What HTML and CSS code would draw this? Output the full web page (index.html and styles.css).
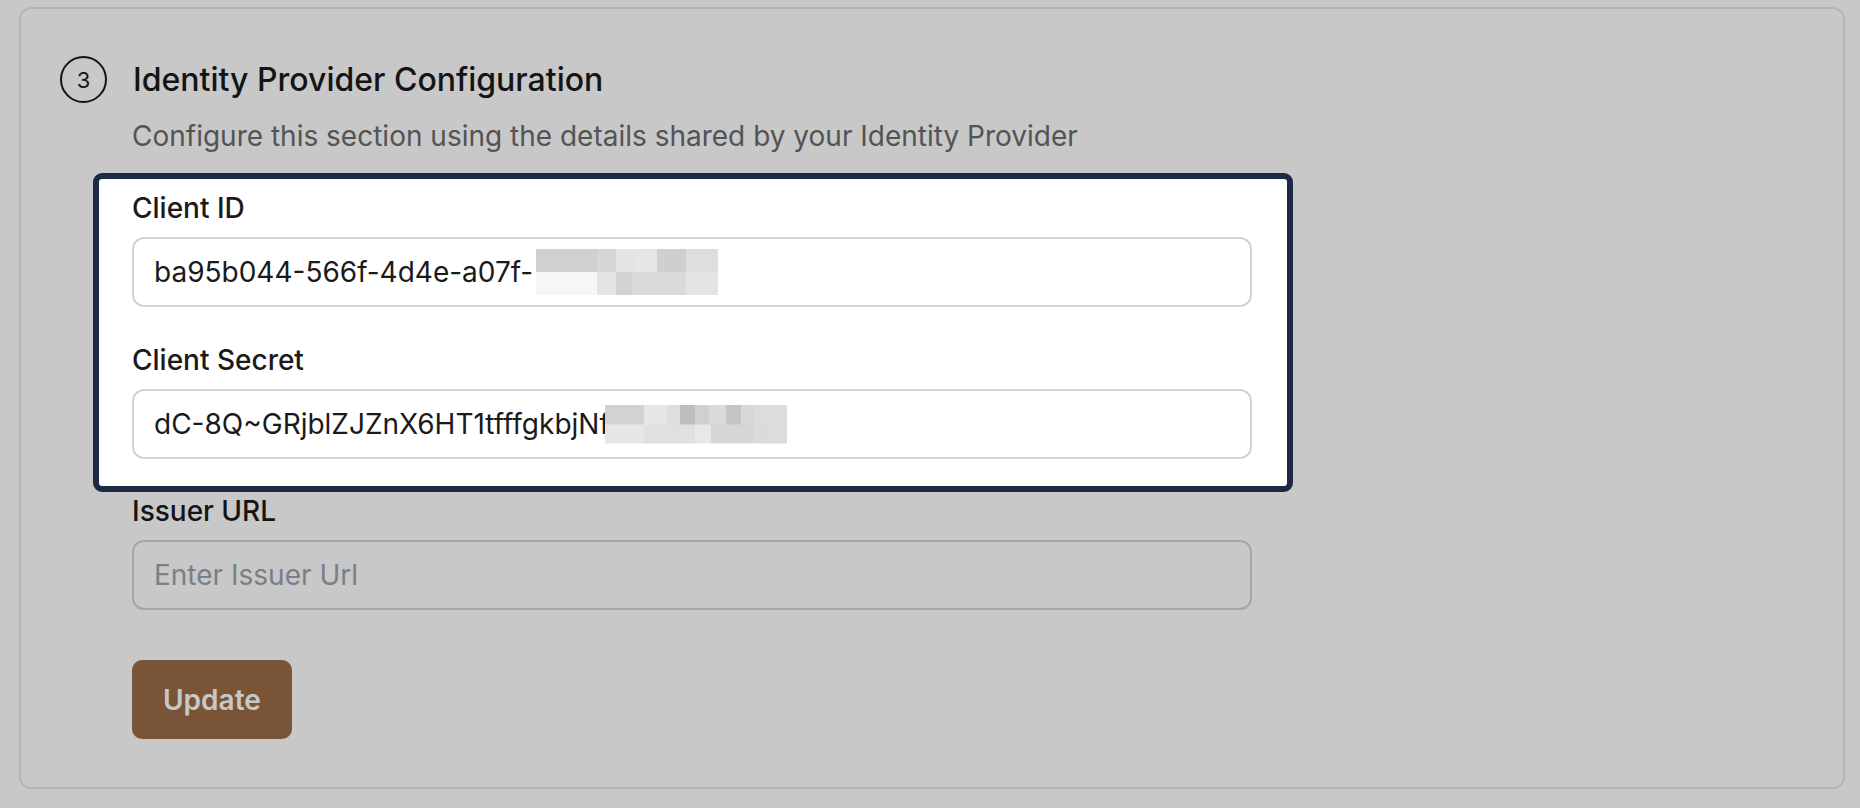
FILE: index.html
```html
<!DOCTYPE html>
<html lang="en">
<head>
<meta charset="utf-8">
<title>Identity Provider Configuration</title>
<link rel="stylesheet" href="styles.css">
</head>
<body>
<div class="page">
  <section class="card">
    <div class="step-head">
      <span class="step-num">3</span>
      <h2 class="step-title">Identity Provider Configuration</h2>
    </div>
    <div class="step-body">
      <p class="step-desc">Configure this section using the details shared by your Identity Provider</p>

      <div class="spotlight">
        <div class="field">
          <label class="field-label">Client ID</label>
          <div class="field-input"><span class="value">ba95b044-566f-4d4e-a07f-</span><span class="mosaic mosaic-id"></span></div>
        </div>
        <div class="field field-next">
          <label class="field-label">Client Secret</label>
          <div class="field-input"><span class="value">dC-8Q~GRjblZJZnX6HT1tfffgkbjNf</span><span class="mosaic mosaic-secret"></span></div>
        </div>
      </div>

      <div class="field field-issuer">
        <label class="field-label">Issuer URL</label>
        <div class="field-input"><span class="placeholder">Enter Issuer Url</span></div>
      </div>

      <button class="btn-update" type="button">Update</button>
    </div>
  </section>
</div>
</body>
</html>
```
FILE: styles.css
```css
* {
  box-sizing: border-box;
}

html, body {
  margin: 0;
  padding: 0;
  background: #ffffff;
}

body {
  font-family: Inter, "Noto Sans", "Liberation Sans", sans-serif;
  color: #1a1a1a;
  overflow: hidden;
}

.page {
  padding: 7px 15px 19px 19px;
}

.card {
  background: #ffffff;
  border: 2px solid #e6e6e6;
  border-radius: 12px;
  padding: 47px 39px 48px 39px;
}

.step-head {
  display: flex;
  align-items: center;
  gap: 26px;
  height: 47px;
}

.step-num {
  width: 47px;
  height: 47px;
  flex: 0 0 47px;
  border: 2px solid #1a1a1a;
  border-radius: 50%;
  display: flex;
  align-items: center;
  justify-content: center;
  font-size: 22px;
  line-height: 1;
  color: #1a1a1a;
}

.step-title {
  margin: 0;
  font-size: 32px;
  line-height: 47px;
  font-weight: 500;
  color: #1a1a1a;
}

.step-body {
  padding-left: 72px;
}

.step-desc {
  margin: 12px 0 0 0;
  font-size: 28px;
  line-height: 42px;
  color: #6b6b6b;
}

.spotlight {
  position: relative;
  z-index: 1;
  margin-top: 16px;
  margin-left: -39px;
  width: 1200px;
  padding: 8px 35px 27px 33px;
  background: #ffffff;
  border: 6px solid #1c2a44;
  border-radius: 9px;
  box-shadow: 0 0 0 4000px rgba(0, 0, 0, 0.2157);
}

.field {
  display: flex;
  flex-direction: column;
  gap: 8px;
}

.field-next {
  margin-top: 32px;
}

.field-issuer {
  margin-top: -2px;
  width: 1120px;
}

.field-label {
  font-size: 28px;
  line-height: 42px;
  font-weight: 500;
  color: #1a1a1a;
}

.field-input {
  height: 70px;
  border: 2px solid #d4d4d4;
  border-radius: 12px;
  background: #ffffff;
  padding: 0 20px;
  display: flex;
  align-items: center;
  font-size: 28px;
  color: #1a1a1a;
  white-space: pre;
}

.placeholder {
  color: #9ca3af;
}

.mosaic {
  display: block;
  width: 182px;
  flex: 0 0 182px;
  background-repeat: no-repeat;
  background-size: 100% 50%;
}

.mosaic-id {
  height: 46px;
  margin-left: 3px;
  background-image:
    linear-gradient(to right,
      #d0d0d0 0 61px, #d6d6d6 61px 80px, #e4e4e4 80px 101px,
      #e6e6e6 101px 121px, #cfcfcf 121px 150px, #dedede 150px 182px),
    linear-gradient(to right,
      #f6f6f6 0 61px, #e4e4e4 61px 80px, #d2d2d2 80px 96px,
      #dadada 96px 150px, #e4e4e4 150px 182px);
  background-position: 0 0, 0 100%;
}

.mosaic-secret {
  height: 39px;
  margin-left: -5px;
  background-image:
    linear-gradient(to right,
      #d2d2d2 0 39px, #e6e6e6 39px 61px, #dedede 61px 75px,
      #bebebe 75px 90px, #d0d0d0 90px 104px, #dadada 104px 121px,
      #c4c4c4 121px 136px, #d8d8d8 136px 149px, #dcdcdc 149px 182px),
    linear-gradient(to right,
      #e6e6e6 0 39px, #e0e0e0 39px 90px, #e8e8e8 90px 106px,
      #d6d6d6 106px 149px, #dadada 149px 163px, #dcdcdc 163px 182px);
  background-position: 0 0, 0 100%;
}

.btn-update {
  margin-top: 50px;
  height: 79px;
  padding: 0 31px;
  border: none;
  border-radius: 10px;
  background: #9c6c45;
  color: #ffffff;
  font-family: inherit;
  font-size: 28px;
  font-weight: 600;
  line-height: 42px;
  cursor: pointer;
}
```
